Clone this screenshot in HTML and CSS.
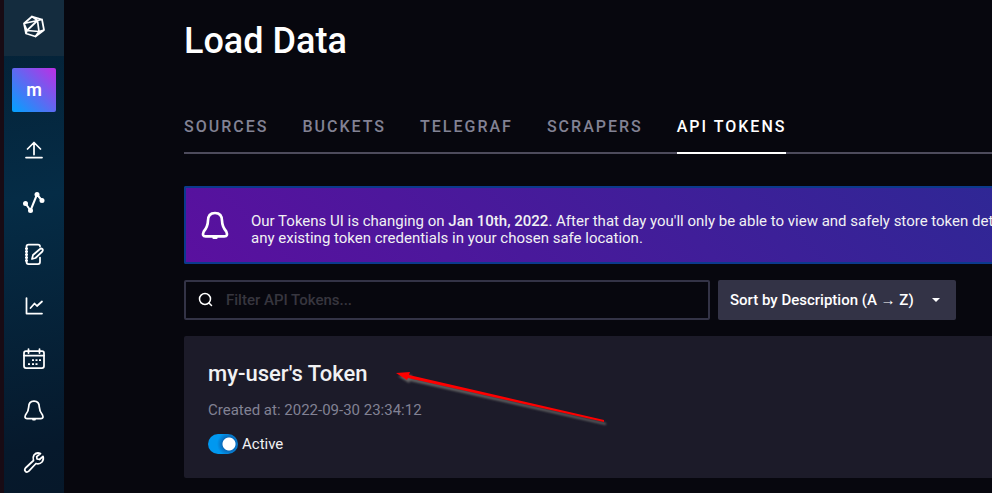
FILE: index.html
```html
<!DOCTYPE html>
<html lang="en">
<head>
    <meta charset="UTF-8">
    <meta name="viewport" content="width=device-width, initial-scale=1.0">
    <link rel="stylesheet" href="styles.css">
    <title>Load Data | API Tokens</title>
</head>
<body>
    <nav class="sidebar">
        <a class="logo" href="#" aria-label="Home">
            <svg width="24" height="24" viewBox="0 0 24 24">
                <path d="M10 2.5 20 5.5 22 16 13.5 22.5 4 19.5 2 9.5Z M2 9.5 15.5 6.5 20 5.5 M10 2.5 15.5 6.5 17 17.5 22 16 M5 16.5 15.5 6.5 M2 9.5 5 16.5 17 17.5 13.5 22.5 M5 16.5 4 19.5"/>
            </svg>
        </a>
        <a class="avatar" href="#">m</a>
        <a class="nav-item" href="#" aria-label="Load Data">
            <svg width="24" height="24" viewBox="0 0 24 24">
                <path d="M4 19.5h16M12 16.5V5M5.5 11 12 4.5 18.5 11"/>
            </svg>
        </a>
        <a class="nav-item" href="#" aria-label="Data Explorer">
            <svg width="24" height="24" viewBox="0 0 24 24">
                <path class="graph" d="M3.5 13.5 8.5 20.5 15 4.5 20 10.5"/>
                <g class="dots">
                    <circle cx="3.5" cy="13.5" r="2.5"/>
                    <circle cx="8.5" cy="20.5" r="2.5"/>
                    <circle cx="15" cy="4.5" r="2.5"/>
                    <circle cx="20" cy="10.5" r="2.5"/>
                </g>
            </svg>
        </a>
        <a class="nav-item" href="#" aria-label="Notebooks">
            <svg width="24" height="24" viewBox="0 0 24 24">
                <path d="M18 4.5Q18 2.5 16 2.5H6.5Q4.5 2.5 4.5 4.5V20Q4.5 22 6.5 22H16Q18 22 18 20V15.5M10 17l1-4 7-6q1.2-1 2.3 0t0 2.5L13.5 16Z"/>
                <path class="days" d="M3 6.5h3M3 9.5h3M3 12.5h3M3 15.5h3M3 18.5h3"/>
            </svg>
        </a>
        <a class="nav-item" href="#" aria-label="Dashboards">
            <svg width="24" height="24" viewBox="0 0 24 24">
                <path d="M4.5 4V19.500H20M8.500 14 12.500 9.500 15 12 20 7.500"/>
            </svg>
        </a>
        <a class="nav-item" href="#" aria-label="Tasks">
            <svg width="24" height="24" viewBox="0 0 24 24">
                <rect x="2" y="5" width="20" height="17" rx="2"/>
                <path d="M2 9.5h20M6.5 3v4M17.5 3v4"/>
                <path class="days" d="M10 14h2M13.5 14h2M17 14h2M6 18h2M10 18h2M13.5 18h2"/>
            </svg>
        </a>
        <a class="nav-item" href="#" aria-label="Alerts">
            <svg width="24" height="24" viewBox="0 0 24 24">
                <path d="M12 3C8.500 3 6.700 5 6.700 9 6.700 12.500 5.500 14.500 3.500 17Q2 20.500 5 20.500H19Q22 20.500 20.500 17C18.500 14.500 17.300 12.500 17.300 9 17.300 5 15.500 3 12 3Z M11 21.500h2"/>
            </svg>
        </a>
        <a class="nav-item" href="#" aria-label="Settings">
            <svg width="24" height="24" viewBox="0 0 24 24">
                <path d="M18.5 3.5Q14.5 2 12 5 10.5 7.5 11.5 10.5L3.5 18Q2 20 3.5 21.5 5 22.7 6.8 21.2L14 13.5Q17.5 14.5 20 12 22 9.5 21 6.3L17.5 9.5 15 9 14.7 6.7Z"/>
            </svg>
        </a>
    </nav>

    <main class="page">
        <h1>Load Data</h1>

        <div class="tabs">
            <a class="tab" href="#">Sources</a>
            <a class="tab" href="#">Buckets</a>
            <a class="tab" href="#">Telegraf</a>
            <a class="tab" href="#">Scrapers</a>
            <a class="tab active" href="#">API Tokens</a>
        </div>

        <div class="banner">
            <svg width="32" height="32" viewBox="0 0 24 24">
                <path d="M12 3C8.500 3 6.700 5 6.700 9 6.700 12.500 5.500 14.500 3.500 17Q2 20.500 5 20.500H19Q22 20.500 20.500 17C18.500 14.500 17.300 12.500 17.300 9 17.300 5 15.500 3 12 3Z M11 21.500h2"/>
            </svg>
            <p>Our Tokens UI is changing on <strong>Jan 10th, 2022</strong>. After that day you'll only be able to view and safely store token details<br>any existing token credentials in your chosen safe location.</p>
        </div>

        <div class="toolbar">
            <label class="search">
                <svg width="16" height="16" viewBox="0 0 16 16">
                    <circle cx="7" cy="7" r="5.5"/><path d="M11 11 13.5 13.5"/>
                </svg>
                <input type="text" placeholder="Filter API Tokens..." aria-label="Filter API Tokens">
            </label>
            <button class="sort" type="button">
                <span>Sort by Description (A → Z)</span>
                <svg width="8" height="4" viewBox="0 0 8 4"><path d="M0 0h8L4 4Z"/></svg>
            </button>
        </div>

        <section class="card">
            <h2>my-user's Token</h2>
            <p class="created">Created at: 2022-09-30 23:34:12</p>
            <label class="toggle">
                <input type="checkbox" checked>
                <span>Active</span>
            </label>
            <svg class="arrow" width="216" height="60" viewBox="0 0 216 60">
                <path d="M0 2 14 1 13 4 208 49 208 51 12 7 11 9Z"/>
            </svg>
        </section>
    </main>
</body>
</html>
```

FILE: styles.css
```css
* {
    box-sizing: border-box;
}

body {
    display: flex;
    min-height: 100vh;
    margin: 0;
    background-color: #07070e;
    color: #f1f1f3;
    font-family: Roboto, "Liberation Sans", sans-serif;
    font-size: 15px;
}

a {
    color: inherit;
    text-decoration: none;
}

svg {
    flex: none;
    fill: none;
    stroke: #fff;
    stroke-width: 2;
    stroke-linecap: round;
    stroke-linejoin: round;
}

h1, h2, p {
    margin: 0;
}

/* Sidebar */
.sidebar {
    display: flex;
    flex-direction: column;
    align-items: center;
    flex: none;
    width: 64px;
    border-left: 4px solid #180b14;
    background: linear-gradient(170deg, #042034 0%, #052c46 40%, #06192c 90%, #06182a 100%);
}

.logo {
    display: flex;
    align-items: center;
    justify-content: center;
    width: 100%;
    height: 56px;
    padding-bottom: 4px;
    background-color: #142c3e;
}

.avatar {
    width: 44px;
    height: 44px;
    margin: 12px 0;
    border-radius: 2px;
    background: linear-gradient(45deg, #00a3ff, #be2ee4);
    color: #fff;
    font-size: 18px;
    font-weight: 600;
    line-height: 44px;
    text-align: center;
}

.nav-item {
    display: flex;
    align-items: center;
    justify-content: center;
    width: 100%;
    height: 52px;
}

.logo svg,
.nav-item svg {
    stroke-width: 1.75;
}

.graph {
    stroke-width: 2;
}

.dots {
    fill: #fff;
    stroke: none;
}

.days {
    stroke-linecap: butt;
}

/* Page */
.page {
    flex: 1;
    min-width: 0;
    padding: 20px 0 16px 120px;
    overflow: hidden;
}

h1 {
    color: #fff;
    font-size: 36px;
    font-weight: 500;
    line-height: 42px;
}

.tabs {
    display: flex;
    gap: 34px;
    margin-top: 38px;
    box-shadow: inset 0 -2px #4d4b5c;
}

.tab {
    height: 54px;
    color: #828294;
    font-size: 16px;
    font-weight: 500;
    letter-spacing: 2px;
    line-height: 54px;
    text-transform: uppercase;
    white-space: nowrap;
}

.tab.active {
    border-bottom: 2px solid #fff;
    color: #fff;
}

.banner {
    display: flex;
    align-items: center;
    gap: 20px;
    height: 78px;
    margin-top: 32px;
    padding: 8px 13px;
    overflow: hidden;
    border: 2px solid #0b3a8d;
    border-right: 0;
    border-radius: 2px 0 0 2px;
    background: linear-gradient(45deg, #5a109f 0%, #2f2795 100%);
}

.banner p {
    margin-top: 10px;
    line-height: 17px;
    white-space: nowrap;
}

.banner strong {
    font-weight: 500;
}

.toolbar {
    display: flex;
    gap: 8px;
    margin-top: 16px;
    padding-right: 36px;
}

.search {
    display: flex;
    flex: 1;
    align-items: center;
    gap: 12px;
    height: 40px;
    padding: 0 12px;
    border: 2px solid #333346;
    border-radius: 2px;
}

.search svg {
    stroke-width: 1.5;
}

.search input {
    flex: 1;
    min-width: 0;
    padding: 0;
    border: 0;
    outline: 0;
    background: none;
    color: #fff;
    font: 500 15px Roboto, sans-serif;
}

.search input::placeholder {
    color: #37363f;
}

.sort {
    display: flex;
    align-items: center;
    justify-content: space-between;
    width: 238px;
    height: 40px;
    padding: 0 16px 0 12px;
    border: 0;
    border-radius: 2px;
    background-color: #333346;
    color: #fff;
    font: 500 15px Roboto, sans-serif;
}

.sort svg {
    fill: #fff;
    stroke: none;
}

/* Token card */
.card {
    position: relative;
    margin-top: 16px;
    padding: 24px;
    border-radius: 2px 0 0 2px;
    background-color: #1c1b29;
}

h2 {
    font-size: 22px;
    font-weight: 500;
    line-height: 28px;
}

.created {
    margin-top: 12px;
    color: #828294;
    line-height: 20px;
}

.toggle {
    display: flex;
    align-items: center;
    gap: 4px;
    width: max-content;
    margin-top: 14px;
    line-height: 20px;
}

.toggle input {
    appearance: none;
    width: 30px;
    height: 20px;
    margin: 0;
    border-radius: 10px;
    background: radial-gradient(circle at 21px 10px, #fff 6px, #0a6cbc 7px, #0098f0 12px);
}

.arrow {
    position: absolute;
    top: 35px;
    left: 212px;
    fill: #f00;
    stroke: none;
    filter: drop-shadow(2px 3px 1px #666);
}
```
